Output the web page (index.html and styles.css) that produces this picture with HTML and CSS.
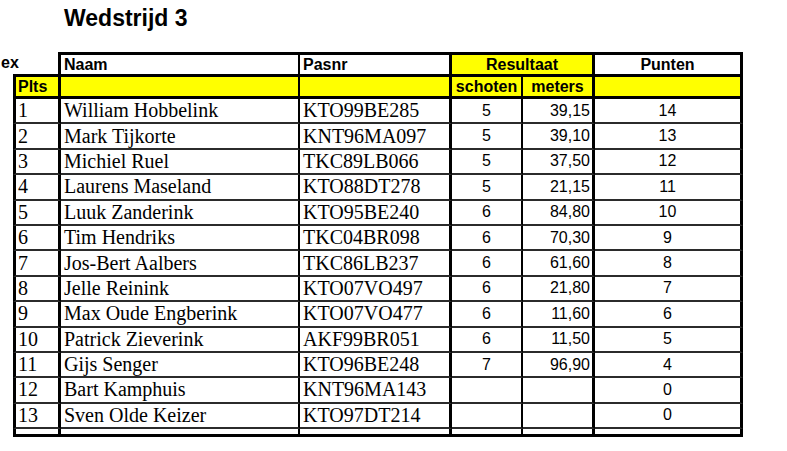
FILE: index.html
```html
<!DOCTYPE html>
<html lang="nl">
<head>
<meta charset="utf-8">
<title>Wedstrijd 3</title>
<link rel="stylesheet" href="styles.css">
</head>
<body>
<h1 class="title">Wedstrijd 3</h1>
<div class="sheet">
  <div class="c hd idx"><span class="idx-text">ex</span></div>
  <div class="c hd thin-r pad">Naam</div>
  <div class="c hd pad">Pasnr</div>
  <div class="c hd yl-bg ctr span2">Resultaat</div>
  <div class="c hd ctr">Punten</div>

  <div class="c yl first pad-s">Plts</div>
  <div class="c yl thin-r"></div>
  <div class="c yl"></div>
  <div class="c yl thin-r ctr">schoten</div>
  <div class="c yl ctr">meters</div>
  <div class="c yl"></div>

  <div class="c first serif pad-s">1</div><div class="c thin-r serif pad">William Hobbelink</div><div class="c serif pad">KTO99BE285</div><div class="c thin-r num ctr">5</div><div class="c num rt">39,15</div><div class="c num ctr">14</div>
  <div class="c first serif pad-s">2</div><div class="c thin-r serif pad">Mark Tijkorte</div><div class="c serif pad">KNT96MA097</div><div class="c thin-r num ctr">5</div><div class="c num rt">39,10</div><div class="c num ctr">13</div>
  <div class="c first serif pad-s">3</div><div class="c thin-r serif pad">Michiel Ruel</div><div class="c serif pad">TKC89LB066</div><div class="c thin-r num ctr">5</div><div class="c num rt">37,50</div><div class="c num ctr">12</div>
  <div class="c first serif pad-s">4</div><div class="c thin-r serif pad">Laurens Maseland</div><div class="c serif pad">KTO88DT278</div><div class="c thin-r num ctr">5</div><div class="c num rt">21,15</div><div class="c num ctr">11</div>
  <div class="c first serif pad-s">5</div><div class="c thin-r serif pad">Luuk Zanderink</div><div class="c serif pad">KTO95BE240</div><div class="c thin-r num ctr">6</div><div class="c num rt">84,80</div><div class="c num ctr">10</div>
  <div class="c first serif pad-s">6</div><div class="c thin-r serif pad">Tim Hendriks</div><div class="c serif pad">TKC04BR098</div><div class="c thin-r num ctr">6</div><div class="c num rt">70,30</div><div class="c num ctr">9</div>
  <div class="c first serif pad-s">7</div><div class="c thin-r serif pad">Jos-Bert Aalbers</div><div class="c serif pad">TKC86LB237</div><div class="c thin-r num ctr">6</div><div class="c num rt">61,60</div><div class="c num ctr">8</div>
  <div class="c first serif pad-s">8</div><div class="c thin-r serif pad">Jelle Reinink</div><div class="c serif pad">KTO07VO497</div><div class="c thin-r num ctr">6</div><div class="c num rt">21,80</div><div class="c num ctr">7</div>
  <div class="c first serif pad-s">9</div><div class="c thin-r serif pad">Max Oude Engberink</div><div class="c serif pad">KTO07VO477</div><div class="c thin-r num ctr">6</div><div class="c num rt">11,60</div><div class="c num ctr">6</div>
  <div class="c first serif pad-s">10</div><div class="c thin-r serif pad">Patrick Zieverink</div><div class="c serif pad">AKF99BR051</div><div class="c thin-r num ctr">6</div><div class="c num rt">11,50</div><div class="c num ctr">5</div>
  <div class="c first serif pad-s">11</div><div class="c thin-r serif pad">Gijs Senger</div><div class="c serif pad">KTO96BE248</div><div class="c thin-r num ctr">7</div><div class="c num rt">96,90</div><div class="c num ctr">4</div>
  <div class="c first serif pad-s">12</div><div class="c thin-r serif pad">Bart Kamphuis</div><div class="c serif pad">KNT96MA143</div><div class="c thin-r num ctr"></div><div class="c num rt"></div><div class="c num ctr">0</div>
  <div class="c first serif pad-s">13</div><div class="c thin-r serif pad">Sven Olde Keizer</div><div class="c serif pad">KTO97DT214</div><div class="c thin-r num ctr"></div><div class="c num rt"></div><div class="c num ctr">0</div>

  <div class="c first last"></div><div class="c thin-r last"></div><div class="c last"></div><div class="c thin-r last"></div><div class="c last"></div><div class="c last"></div>
</div>
</body>
</html>
```
FILE: styles.css
```css
body {
  margin: 0;
  background: #fff;
  color: #000;
  font-family: "Liberation Sans", Arial, sans-serif;
}

.title {
  margin: 0 0 0 64px;
  padding-top: 5px;
  font: 700 23px/26px "Liberation Sans", Arial, sans-serif;
}

.sheet {
  display: grid;
  grid-template-columns: 48px 239px 152px 71px 72px 148px;
  grid-template-rows: 25px 22px repeat(13, 25.4px) 8px;
  width: max-content;
  margin: 21px 0 0 13px;
}

.c {
  box-sizing: border-box;
  display: flex;
  align-items: center;
  white-space: nowrap;
  border-right: 3px solid #000;
  border-bottom: 2px solid #2b2b2b;
}

.thin-r {
  border-right-width: 2px;
}

.first {
  border-left: 3px solid #000;
}

.hd {
  border-top: 3px solid #000;
  border-bottom: 3px solid #000;
  font-weight: 700;
  font-size: 16px;
}

.idx {
  border-top: none;
}

.idx-text {
  margin-left: -12px;
}

.yl-bg {
  background: #ffff00;
}

.span2 {
  grid-column: span 2;
}

.yl {
  background: #ffff00;
  border-bottom: 3px solid #000;
  font-weight: 700;
  font-size: 16px;
}

.pad {
  padding-left: 3px;
}

.pad-s {
  padding-left: 2px;
}

.serif {
  font-family: "Liberation Serif", "Times New Roman", serif;
  font-size: 20px;
}

.num {
  font-size: 16px;
}

.ctr {
  justify-content: center;
}

.rt {
  justify-content: flex-end;
  padding-right: 2px;
}

.last {
  border-bottom: 3px solid #000;
}
```
